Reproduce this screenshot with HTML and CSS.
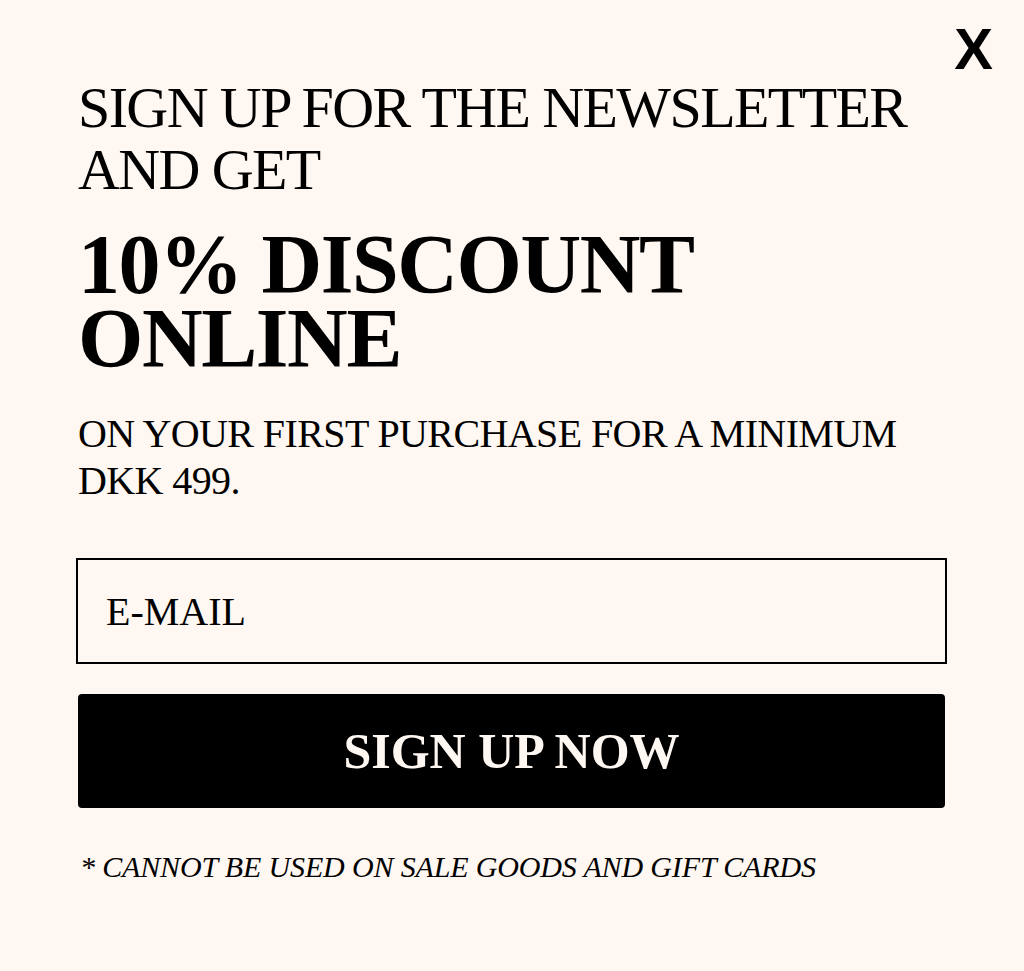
FILE: index.html
```html
<!DOCTYPE html>
<html lang="en">
<head>
<meta charset="utf-8">
<title>Newsletter</title>
<link rel="stylesheet" href="styles.css">
</head>
<body>
<div class="popup">
  <button class="close" aria-label="Close">X</button>
  <h1 class="intro">SIGN UP FOR THE NEWSLETTER<br>AND GET</h1>
  <h2 class="discount">10% DISCOUNT<br>ONLINE</h2>
  <p class="terms">ON YOUR FIRST PURCHASE FOR A MINIMUM<br>DKK 499.</p>
  <form class="form">
    <div class="email">E-MAIL</div>
    <button type="button" class="submit">SIGN UP NOW</button>
  </form>
  <p class="note">* CANNOT BE USED ON SALE GOODS AND GIFT CARDS</p>
</div>
</body>
</html>
```
FILE: styles.css
```css
html, body {
  margin: 0;
  padding: 0;
  background: #fff7f1;
}
body {
  width: 1024px;
  height: 971px;
  overflow: hidden;
  font-family: "Liberation Serif", "DejaVu Serif", serif;
  color: #000;
}
.popup {
  position: relative;
  padding: 77px 79px 0 78px;
  white-space: nowrap;
}
.close {
  position: absolute;
  top: 20px;
  right: 31px;
  background: none;
  border: 0;
  padding: 0;
  font-family: "Liberation Sans", Arial, sans-serif;
  font-weight: 700;
  font-size: 58px;
  line-height: 1;
  color: #000;
  filter: blur(0.6px);
}
.intro {
  margin: 0;
  font-weight: 400;
  font-size: 58px;
  line-height: 62px;
  letter-spacing: -1.6px;
}
.discount {
  margin: 27px 0 0;
  font-weight: 700;
  font-size: 84px;
  line-height: 74px;
  letter-spacing: -1.4px;
}
.terms {
  margin: 34px 0 0;
  font-size: 40px;
  line-height: 47px;
  letter-spacing: -0.6px;
}
.form {
  margin-top: 54px;
  display: flex;
  flex-direction: column;
  gap: 30px;
}
.email {
  margin: 0 -2px;
  border: 2px solid #000;
  box-sizing: border-box;
  height: 106px;
  display: flex;
  align-items: center;
  padding-left: 28px;
  font-size: 40px;
}
.submit {
  height: 114px;
  background: #000;
  color: #fff7f1;
  border: 0;
  border-radius: 4px;
  font-family: "Liberation Serif", "DejaVu Serif", serif;
  font-weight: 700;
  font-size: 50px;
  padding: 0;
}
.note {
  margin: 42px 0 0 2px;
  font-style: italic;
  font-size: 30px;
  line-height: 34px;
  letter-spacing: -0.15px;
}
```
